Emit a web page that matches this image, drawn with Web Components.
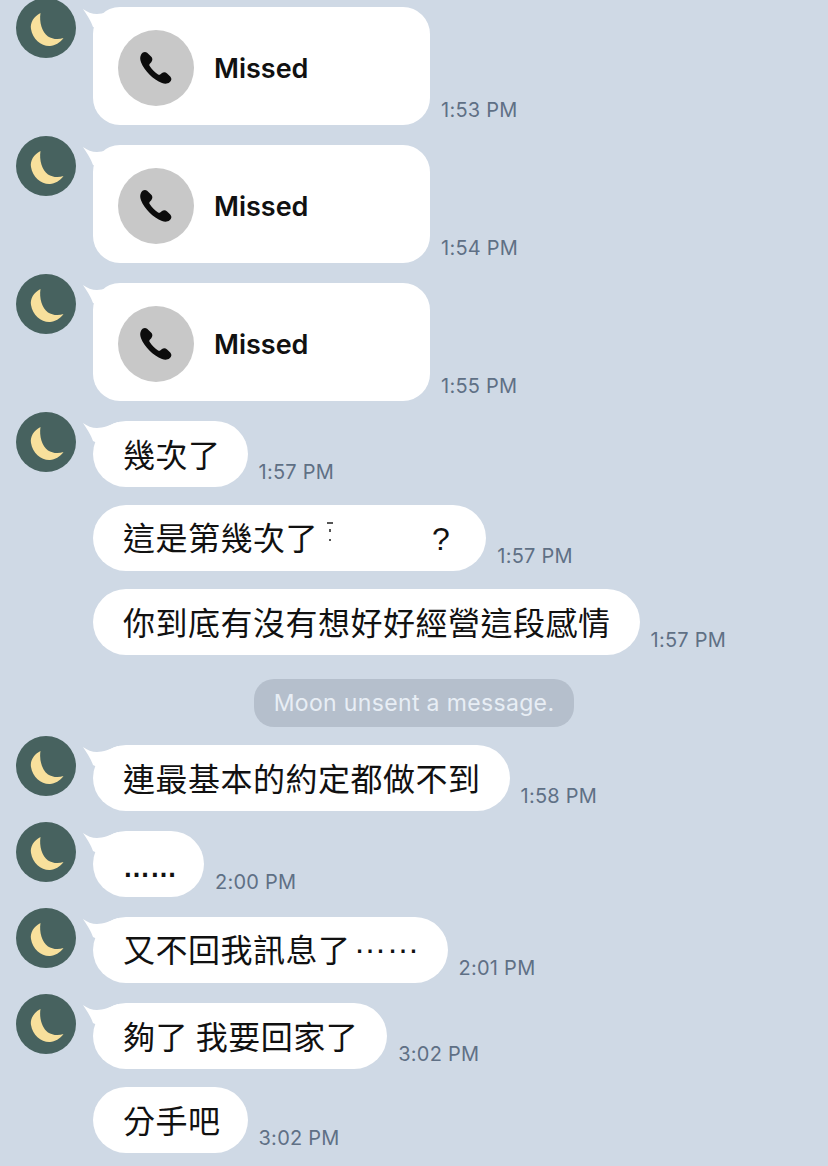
<!DOCTYPE html>
<html>
<head>
<meta charset="utf-8">
<style>
  html, body { margin: 0; background: #cfd9e5; }
  body { width: 828px; height: 1166px; overflow: hidden; }
  system-note + chat-msg { margin-top: 0; }
  .dots-low { font: 700 27px/40px "Liberation Sans", sans-serif; letter-spacing: 0; position: relative; top: 2px; }
  .dots-mid { font: 400 33px/40px "Liberation Sans", sans-serif; letter-spacing: 0; margin-left: 3px; position: relative; top: -9px; }
  .qmark { font-family: "Liberation Sans", sans-serif; }
</style>
</head>
<body>
<chat-log>
  <chat-msg avatar time="1:53 PM"><call-card></call-card></chat-msg>
  <chat-msg avatar time="1:54 PM"><call-card></call-card></chat-msg>
  <chat-msg avatar time="1:55 PM"><call-card></call-card></chat-msg>
  <chat-msg avatar time="1:57 PM" style="--pr: 27px">幾次了</chat-msg>
  <chat-msg time="1:57 PM" style="--pr: 36px">這是第幾次了<redact-mark></redact-mark><span class="qmark">?</span></chat-msg>
  <chat-msg time="1:57 PM">你到底有沒有想好好經營這段感情</chat-msg>
  <system-note>Moon unsent a message.</system-note>
  <chat-msg avatar time="1:58 PM">連最基本的約定都做不到</chat-msg>
  <chat-msg avatar time="2:00 PM" style="--pr: 27px"><span class="dots-low">……</span></chat-msg>
  <chat-msg avatar time="2:01 PM" style="--pr: 28px">又不回我訊息了<span class="dots-mid">……</span></chat-msg>
  <chat-msg avatar time="3:02 PM">夠了 我要回家了</chat-msg>
  <chat-msg time="3:02 PM" style="--pr: 27px">分手吧</chat-msg>
</chat-log>
<script>
class ChatLog extends HTMLElement {
  constructor() {
    super();
    this.attachShadow({ mode: "open" });
    this.shadowRoot.innerHTML = `
      <style>
        :host { display: flex; flex-direction: column; gap: 18px; padding: 7px 0 0 16px; }
        ::slotted(chat-msg[avatar]:not(:first-child)) { margin-top: 2px; }
      </style>
      <slot></slot>
    `;
  }
}

class MoonAvatar extends HTMLElement {
  constructor() {
    super();
    this.attachShadow({ mode: "open" });
    this.shadowRoot.innerHTML = `
      <style>
        :host { display: block; width: 60px; height: 60px; }
        svg { display: block; }
      </style>
      <svg width="60" height="60" viewBox="0 0 60 60">
        <circle cx="30" cy="30" r="30" fill="#47625f"/>
        <path d="M24.500 15C17.500 18.500 14 25 15 31C16.500 41 25.500 48.500 34 48C39 47.600 44 45 47.500 40C42 42 36 41 32 38.500C26 34 23 24 24.500 15Z" fill="#f8e09c"/>
      </svg>
    `;
  }
}

class ChatMsg extends HTMLElement {
  constructor() {
    super();
    this.attachShadow({ mode: "open" });
    const hasAvatar = this.hasAttribute("avatar");
    const time = this.getAttribute("time") || "";
    this.shadowRoot.innerHTML = `
      <style>
        :host { display: flex; align-items: flex-end; }
        .side { width: 77px; flex: none; align-self: flex-start; margin-top: -9px; height: 60px; }
        .bubble {
          position: relative;
          background: #fff;
          border-radius: 33px;
          padding: 12px var(--pr, 29px) 14px 30px;
          height: 40px;
          display: flex;
          align-items: center;
          font: 400 32px/40px "Noto Sans CJK TC", "Liberation Sans", sans-serif;
          letter-spacing: 0.5px;
          color: #111;
          white-space: nowrap;
        }
        .tail { position: absolute; left: -10px; top: 0; display: block; }
        .text { position: relative; }
        .time {
          margin: 0 0 3px 11px;
          font: 400 20px/24px Inter, "Liberation Sans", sans-serif;
          letter-spacing: 0.25px;
          color: #5f7085;
          white-space: nowrap;
        }
        .bubble.card { padding: 0; height: 118px; border-radius: 27px; }
      </style>
      <div class="side">${hasAvatar ? "<moon-avatar></moon-avatar>" : ""}</div>
      <div class="bubble">
        ${hasAvatar ? `<svg class="tail" width="36" height="32" viewBox="0 0 36 32"><path d="M0 2C4 5 9 7 14 7C20 7 27 4 35 1L35 32L10 20C8 14 4 8 0 2Z" fill="#fff"/></svg>` : ""}
        <span class="text"><slot></slot></span>
      </div>
      <div class="time">${time}</div>
    `;
    if (this.querySelector("call-card")) this.shadowRoot.querySelector(".bubble").classList.add("card");
  }
}

class CallCard extends HTMLElement {
  constructor() {
    super();
    this.attachShadow({ mode: "open" });
    this.shadowRoot.innerHTML = `
      <style>
        :host { display: flex; align-items: center; gap: 20px; width: 337px; height: 118px; padding: 4px 0 0 25px; box-sizing: border-box; }
        .dial { width: 76px; height: 76px; border-radius: 50%; background: #c8c8c8; display: flex; align-items: center; justify-content: center; }
        .label { font: 600 27px/34px Inter, "Liberation Sans", sans-serif; letter-spacing: 0; color: #111; margin-top: 1px; }
      </style>
      <div class="dial">
        <svg width="38" height="38" viewBox="0 0 24 24"><path d="M6.400 2.300C5 1.500 3.500 2 2.800 3.200C1.800 4.800 1.800 6.500 2.600 8.500C4.500 13.300 10.300 19.500 15.800 21.500C17.600 22.100 19.300 22.100 20.600 21C21.900 20 22.100 18.500 21 17.300L19 15.500C18 14.500 16.800 14.400 15.800 15.200L14.800 16C14.400 16.400 13.800 16.400 13.300 16.100C11.300 14.800 9.400 12.900 8 10.800C7.700 10.300 7.700 9.700 8.100 9.300L9 8.300C9.900 7.300 9.900 6.100 9.200 5.100Z" fill="#0c0c0c"/></svg>
      </div>
      <div class="label">Missed</div>
    `;
  }
}

class RedactMark extends HTMLElement {
  constructor() {
    super();
    this.attachShadow({ mode: "open" });
    this.shadowRoot.innerHTML = `
      <style>
        :host { display: inline-block; width: 114px; height: 30px; position: relative; }
        i { position: absolute; background: #555; }
      </style>
      <i style="left:9px;top:2px;width:6px;height:2px"></i>
      <i style="left:11px;top:9px;width:2px;height:3px"></i>
      <i style="left:11px;top:19px;width:2px;height:2px"></i>
    `;
  }
}

class SystemNote extends HTMLElement {
  constructor() {
    super();
    this.attachShadow({ mode: "open" });
    this.shadowRoot.innerHTML = `
      <style>
        :host { display: block; align-self: flex-start; margin: 6px 0 0 238px; height: 48px; width: 320px; border-radius: 20px; background: #b5bfcc; text-align: center; font: 400 23px/48px Inter, "Liberation Sans", sans-serif; letter-spacing: 0.35px; color: #e8eef5; white-space: nowrap; }
      </style>
      <slot></slot>
    `;
  }
}

customElements.define("chat-log", ChatLog);
customElements.define("moon-avatar", MoonAvatar);
customElements.define("chat-msg", ChatMsg);
customElements.define("call-card", CallCard);
customElements.define("redact-mark", RedactMark);
customElements.define("system-note", SystemNote);
</script>
</body>
</html>
